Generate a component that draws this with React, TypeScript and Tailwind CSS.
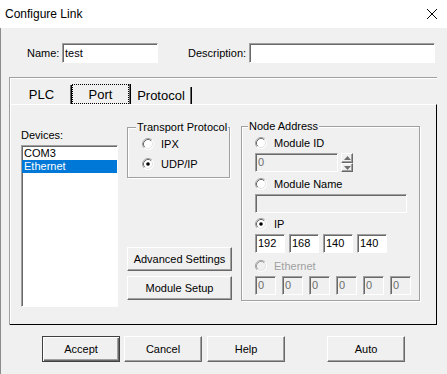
import React from 'react';

// ── Classic 3D borders ────────────────────────────────────────────────────────
const sunken =
  'border border-t-[#a0a0a0] border-l-[#a0a0a0] border-r-white border-b-white shadow-[inset_1px_1px_0_#696969]';
const raised =
  'border border-t-white border-l-white border-r-[#696969] border-b-[#696969] shadow-[inset_-1px_-1px_0_#a0a0a0]';
const etched = 'border border-[#a0a0a0] shadow-[inset_1px_1px_0_white,1px_1px_0_white]';

function Radio({ checked, disabled }: { checked?: boolean; disabled?: boolean }) {
  return (
    <svg width="12" height="12" viewBox="0 0 12 12" className="shrink-0">
      <circle cx="6" cy="6" r="5.5" fill={disabled ? '#f0f0f0' : '#fff'} />
      <path d="M2.11 9.89 A5.5 5.5 0 0 1 9.89 2.11" fill="none" stroke="#a0a0a0" />
      <path d="M2.82 9.18 A4.5 4.5 0 0 1 9.18 2.82" fill="none" stroke={disabled ? '#a0a0a0' : '#696969'} />
      <path d="M9.89 2.11 A5.5 5.5 0 0 1 2.11 9.89" fill="none" stroke="#fff" />
      <path d="M9.18 2.82 A4.5 4.5 0 0 1 2.82 9.18" fill="none" stroke="#e3e3e3" />
      {checked && <circle cx="6" cy="6" r="1.8" fill="#000" />}
    </svg>
  );
}

function RadioRow({ label, checked, disabled, className = '' }: { label: string; checked?: boolean; disabled?: boolean; className?: string }) {
  return (
    <div className={`flex items-center h-[12px] ${className}`}>
      <Radio checked={checked} disabled={disabled} />
      <span className={`ml-[7px] ${disabled ? 'text-[#a0a0a0]' : ''}`}>{label}</span>
    </div>
  );
}

function Box({ w, value, disabled }: { w: string; value?: string; disabled?: boolean }) {
  return (
    <div className={`${w} h-[19px] ${sunken} ${disabled ? 'bg-[#f0f0f0] text-[#6d6d6d]' : 'bg-white'} flex items-center pl-[2px]`}>
      {value}
    </div>
  );
}

function Button({ label, w, isDefault, className = '' }: { label: string; w: string; isDefault?: boolean; className?: string }) {
  const frame = isDefault
    ? 'border border-[#404040] shadow-[inset_1px_1px_0_white,inset_-1px_-1px_0_#696969,inset_-2px_-2px_0_#a0a0a0]'
    : raised;
  return (
    <div className={`${w} ${frame} bg-[#f0f0f0] flex items-center justify-center ${className}`}>{label}</div>
  );
}

export default function App() {
  return (
    <div className="w-[447px] h-[374px] bg-[#f0f0f0] font-['Liberation_Sans',Arial,sans-serif] text-[11px] leading-[13px] text-black flex flex-col overflow-hidden">
      {/* Title bar */}
      <div className="h-[28px] bg-white flex items-center pl-[5px] pr-[10px] shrink-0">
        <span className="text-[12px] leading-[14px]">Configure Link</span>
        <svg width="10" height="10" viewBox="0 0 10 10" className="ml-auto">
          <path d="M0 0 L10 10 M10 0 L0 10" stroke="#000" strokeWidth="1" />
        </svg>
      </div>

      <div className="flex-1 border-l border-[#8c8c8c] flex flex-col">
        {/* Name / Description */}
        <div className="flex items-center mt-[15px] h-[20px]">
          <span className="ml-[26px] w-[35px]">Name:</span>
          <div className={`w-[96px] h-[20px] bg-white ${sunken} flex items-center pl-[2px]`}>test</div>
          <span className="ml-[30px] w-[61px]">Description:</span>
          <div className={`w-[186px] h-[20px] bg-white ${sunken}`} />
        </div>

        {/* Tab control */}
        <div className="ml-[8px] mt-[14px] w-[428px] h-[248px] border-l border-t border-[#a0a0a0] shadow-[inset_1px_1px_0_white] flex flex-col">
          <div className="h-[26px] flex items-end pl-[2px] text-[13px] leading-[15px]">
            <div className="w-[60px] h-[19px] flex items-center justify-center border-r border-r-black shadow-[inset_-1px_0_0_#696969]">
              PLC
            </div>
            <div className="w-[59px] h-[20px] flex border-r border-r-black shadow-[inset_-1px_0_0_#696969]">
              <div className="w-[57px] h-[20px] border border-dotted border-black flex items-center justify-center">Port</div>
            </div>
            <div className="w-[61px] h-[17px] flex items-center justify-center border-r border-r-black shadow-[inset_-1px_0_0_#696969]">
              Protocol
            </div>
          </div>

          <div className="flex-1 flex items-start border-t border-t-white border-r border-b border-r-black border-b-black">
            {/* Devices */}
            <div className="ml-[11px] pt-[24px] flex flex-col">
              <span>Devices:</span>
              <div className={`mt-[3px] w-[97px] h-[162px] bg-white ${sunken} pt-[1px]`}>
                <div className="h-[13px] pl-[2px]">COM3</div>
                <div className="h-[13px] pl-[2px] bg-[#0078d7] text-white">Ethernet</div>
              </div>
            </div>

            {/* Transport + buttons */}
            <div className="ml-[9px] pt-[22px] w-[104px] flex flex-col">
              <div className={`relative w-[103px] h-[51px] ${etched} pl-[14px] pt-[10px]`}>
                <span className="absolute -top-[7px] left-[8px] px-[1px] bg-[#f0f0f0]">Transport Protocol</span>
                <RadioRow label="IPX" />
                <RadioRow label="UDP/IP" checked className="mt-[8px]" />
              </div>
              <Button label="Advanced Settings" w="w-[105px] h-[24px]" className="mt-[69px]" />
              <Button label="Module Setup" w="w-[105px] h-[24px]" className="mt-[5px]" />
            </div>

            {/* Node address */}
            <div className="ml-[10px] pt-[21px]">
              <div className={`relative w-[179px] h-[175px] ${etched} pl-[13px] pt-[10px] flex flex-col`}>
                <span className="absolute -top-[7px] left-[6px] px-[1px] bg-[#f0f0f0]">Node Address</span>
                <RadioRow label="Module ID" />
                <div className="mt-[4px] flex">
                  <Box w="w-[83px]" value="0" disabled />
                  <div className="ml-[3px] w-[12px] h-[19px] flex flex-col">
                    <div className={`h-[10px] ${raised} flex items-center justify-center`}>
                      <svg width="7" height="4" viewBox="0 0 7 4">
                        <path d="M3.5 0 L7 4 L0 4 Z" fill="#707070" />
                      </svg>
                    </div>
                    <div className={`h-[9px] ${raised} flex items-center justify-center`}>
                      <svg width="7" height="4" viewBox="0 0 7 4">
                        <path d="M0 0 L7 0 L3.5 4 Z" fill="#707070" />
                      </svg>
                    </div>
                  </div>
                </div>
                <RadioRow label="Module Name" className="mt-[6px]" />
                <div className="mt-[4px]">
                  <Box w="w-[152px]" disabled />
                </div>
                <RadioRow label="IP" checked className="mt-[5px]" />
                <div className="mt-[4px] flex gap-[4px]">
                  {['192', '168', '140', '140'].map((v, i) => (
                    <Box key={i} w="w-[30px]" value={v} />
                  ))}
                </div>
                <RadioRow label="Ethernet" disabled className="mt-[7px]" />
                <div className="mt-[4px] flex gap-[6px]">
                  {[0, 1, 2, 3, 4, 5].map(i => (
                    <Box key={i} w="w-[21px]" value="0" disabled />
                  ))}
                </div>
              </div>
            </div>
          </div>
        </div>

        {/* Dialog buttons */}
        <div className="mt-[11px] ml-[41px] flex">
          <Button label="Accept" w="w-[78px] h-[26px]" isDefault />
          <Button label="Cancel" w="w-[78px] h-[26px]" className="ml-[4px]" />
          <Button label="Help" w="w-[78px] h-[26px]" className="ml-[5px]" />
          <Button label="Auto" w="w-[78px] h-[26px]" className="ml-[42px]" />
        </div>
      </div>
    </div>
  );
}
